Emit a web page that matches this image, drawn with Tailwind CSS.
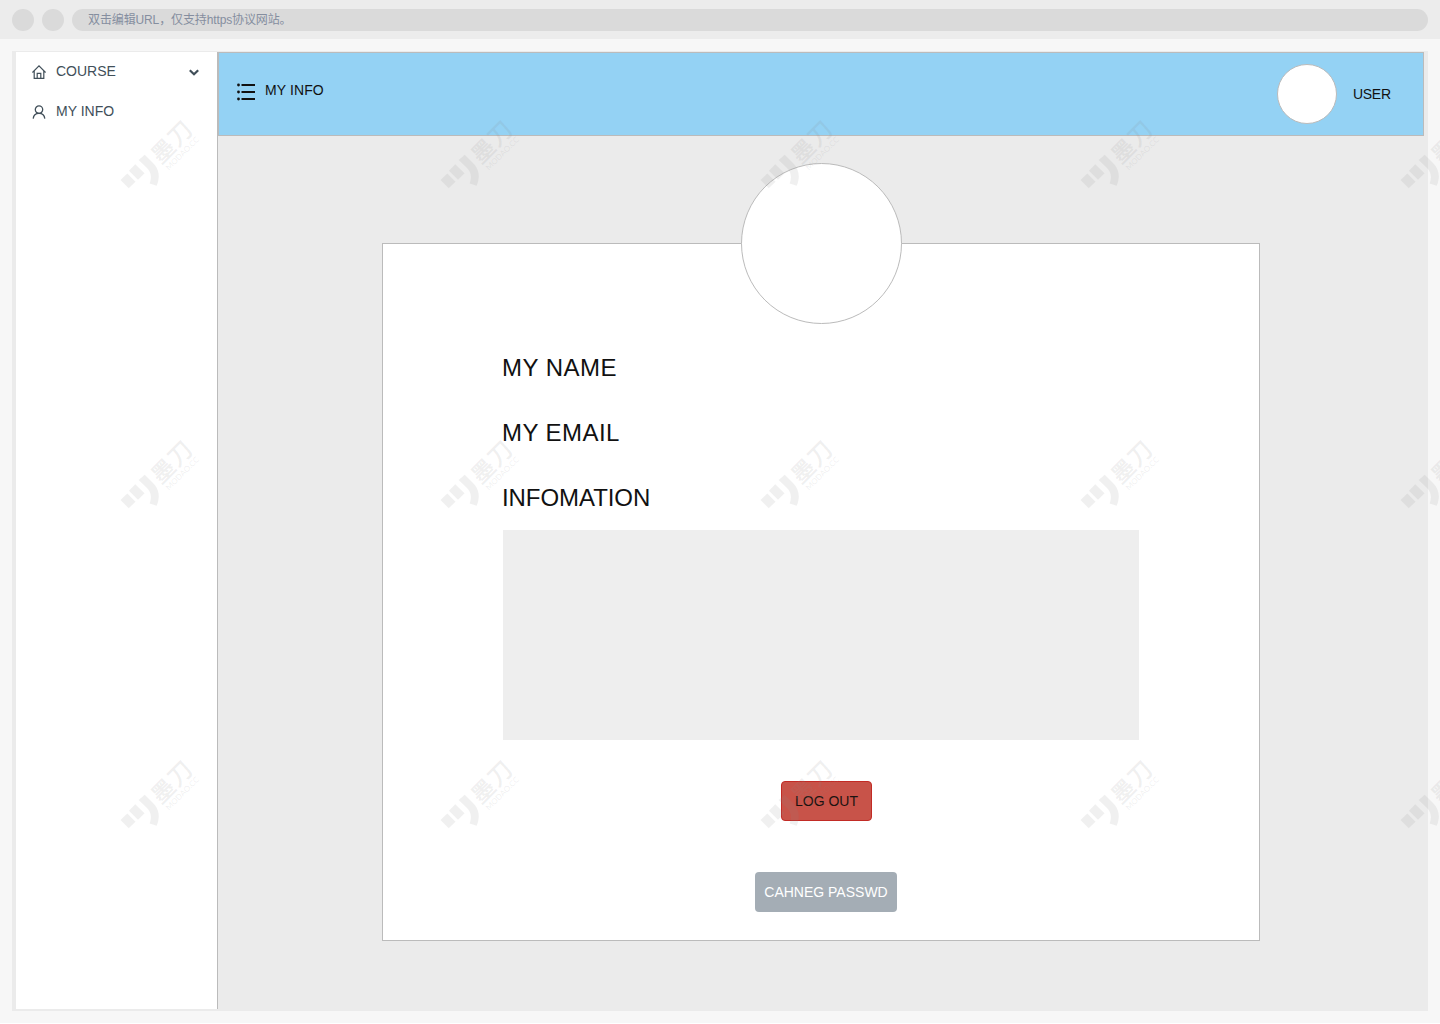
<!DOCTYPE html>
<html lang="zh">
<head>
<meta charset="utf-8">
<title>My Info</title>
<script src="https://cdn.jsdelivr.net/npm/@tailwindcss/browser@4"></script>
</head>
<body class="relative h-[1024px] w-[1440px] overflow-hidden bg-white font-['Liberation_Sans','Noto_Sans_CJK_SC',sans-serif] text-sm text-[#111]">
<div class="flex h-[1023px] flex-col bg-[#f7f7f7]">
  <!-- Browser bar -->
  <div class="flex h-[39px] shrink-0 items-center bg-[#ececec] px-3 pt-px pb-0">
    <div class="size-[22px] rounded-full bg-[#dadada]"></div>
    <div class="ml-2 size-[22px] rounded-full bg-[#dadada]"></div>
    <div class="ml-2 flex h-[22px] flex-1 items-center rounded-full bg-[#dadada] pl-4 text-xs tracking-[-0.12px] text-[#858e9f]">双击编辑URL，仅支持https协议网站。</div>
  </div>
  <!-- Page frame -->
  <div class="mx-3 mt-3 flex h-[960px] bg-[#ebebeb] pt-px pr-1 pb-0.5 pl-1">
    <aside class="w-[202px] shrink-0 border-r border-[#bbb] bg-white text-[#414f59]">
      <div class="flex h-10 items-center pl-4 pr-[18px]">
        <svg class="-mt-px size-[14px]" viewBox="0 0 14 14" fill="none" stroke="currentColor" stroke-width="1.2"><path d="M.4 7.500 7 .9l6.600 6.600M2.200 6v7.300h9.600V6M5.200 13V8.300h3.600V13"/></svg>
        <span class="ml-2.5 flex-1 pb-0.5">COURSE</span>
        <svg class="mt-px h-[7px] w-[10px]" viewBox="0 0 10 7" fill="none" stroke="currentColor" stroke-width="2.200"><path d="M.8 1.200 5 5.300l4.200-4.100"/></svg>
      </div>
      <div class="flex h-10 items-center pl-4">
        <svg class="-mt-px size-[14px]" viewBox="0 0 14 14" fill="none" stroke="currentColor" stroke-width="1.300"><circle cx="7" cy="4.600" r="3.700"/><path d="M1.200 13.600C1.500 10.300 3.600 8.300 7 8.300s5.500 2 5.800 5.300"/></svg>
        <span class="ml-2.5 pb-0.5">MY INFO</span>
      </div>
    </aside>
    <div class="flex flex-1 flex-col">
      <header class="flex h-[84px] shrink-0 items-center border border-[#bbb] bg-[#94d2f4] pl-[18px] pr-8">
        <svg class="mt-[-4px] h-[18px] w-[18px]" viewBox="0 -1 18 18" fill="none" stroke="#111" stroke-width="2"><path d="M4.500 1H18M4.500 8H18M4.500 15H18"/><g fill="#111" stroke="none"><circle cx="1.500" cy="1" r="1.400"/><circle cx="1.500" cy="8" r="1.400"/><circle cx="1.500" cy="15" r="1.400"/></g></svg>
        <span class="mt-[-8px] ml-2.5 flex-1 tracking-[0.1px]">MY INFO</span>
        <div class="size-[60px] rounded-full border border-[#bbb] bg-white"></div>
        <span class="ml-4 w-[38px] tracking-[-0.3px]">USER</span>
      </header>
      <main class="flex flex-1 flex-col pl-[164px] pt-[27px]">
        <div class="z-10 ml-[359px] size-[161px] shrink-0 rounded-full border border-[#bbb] bg-white"></div>
        <section class="-mt-[81px] flex h-[698px] w-[878px] shrink-0 flex-col border border-[#bbb] bg-white pt-[91px]">
          <div class="flex flex-col pl-[119px] text-2xl leading-[65px]">
            <div class="tracking-[0.5px]">MY NAME</div>
            <div class="tracking-[0.45px]">MY EMAIL</div>
            <div class="tracking-[-0.07px]">INFOMATION</div>
          </div>
          <div class="ml-[120px] h-[210px] w-[636px] shrink-0 bg-[#eee]"></div>
          <button class="mt-[41px] ml-[398px] h-10 w-[91px] shrink-0 rounded-[4px] border border-[#c22b25] bg-[#c85349] text-[#1c1311]">LOG OUT</button>
          <button class="mt-[51px] ml-[372px] h-10 w-[142px] shrink-0 rounded-[4px] bg-[#a4adb5] text-white">CAHNEG PASSWD</button>
        </section>
      </main>
    </div>
  </div>
</div>
<!-- Tiled watermark -->
<svg class="pointer-events-none absolute inset-0 z-20" width="1440" height="1024" viewBox="0 0 1440 1024">
  <defs>
    <g id="mark">
      <path d="M.5 60 7.300 53.500 15.500 61.700 8.700 68.200ZM9 50.700 15.200 44.300 24.500 53.300 18 59.800ZM18.700 40 24.700 34.700 33 43C39 49 40.500 57 36.700 65.700L29.700 63.500C32 57 31 52 27 48Z"/>
      <g text-anchor="middle" font-family="Noto Sans CJK SC, sans-serif" font-weight="700">
        <text transform="translate(43 30.700) rotate(-45)" y="8.800" font-size="23">墨</text>
        <text transform="translate(59.500 13.200) rotate(-45)" y="9" font-size="24" font-weight="500">刀</text>
        <text transform="translate(62.300 33.300) rotate(-45)" y="2.900" font-size="8" font-weight="400" font-family="Lato, sans-serif">MODAO.CC</text>
      </g>
    </g>
    <g id="row">
      <use href="#mark" x="120"/><use href="#mark" x="440"/><use href="#mark" x="760"/><use href="#mark" x="1080"/><use href="#mark" x="1400"/>
    </g>
  </defs>
  <g fill="#888888" fill-opacity="0.13"><use href="#row" y="120"/><use href="#row" y="440"/><use href="#row" y="760"/></g>
</svg>
</body>
</html>
